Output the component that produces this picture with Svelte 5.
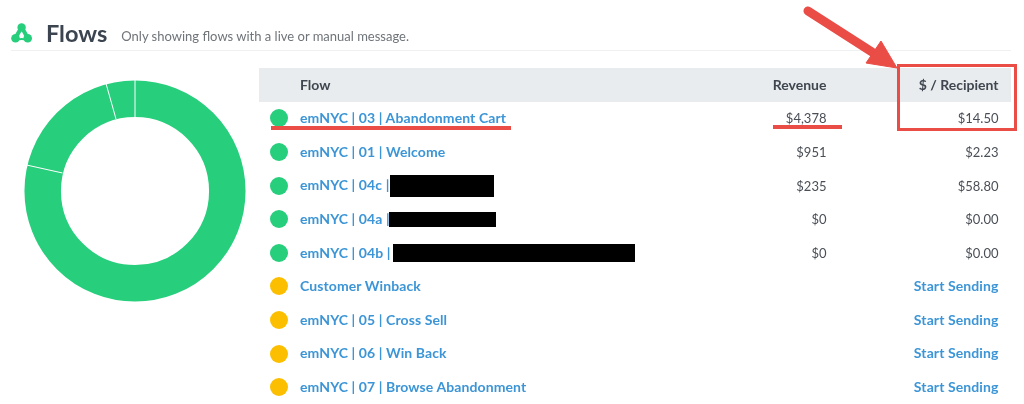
<script>
    const green = "#27ce7c";
    const yellow = "#fcbf00";

    const flows = [
        { name: "emNYC | 03 | Abandonment Cart", status: green, revenue: "$4,378", perRecipient: "$14.50" },
        { name: "emNYC | 01 | Welcome", status: green, revenue: "$951", perRecipient: "$2.23" },
        { name: "emNYC | 04c |", status: green, revenue: "$235", perRecipient: "$58.80", redact: [104, 22, 1] },
        { name: "emNYC | 04a |", status: green, revenue: "$0", perRecipient: "$0.00", redact: [107, 15, -1] },
        { name: "emNYC | 04b |", status: green, revenue: "$0", perRecipient: "$0.00", redact: [242, 18, 2] },
        { name: "Customer Winback", status: yellow },
        { name: "emNYC | 05 | Cross Sell", status: yellow },
        { name: "emNYC | 06 | Win Back", status: yellow },
        { name: "emNYC | 07 | Browse Abandonment", status: yellow },
    ];
</script>

<div class="page">
    <header class="head">
        <svg class="logo" viewBox="0 0 22 22" width="22" height="22">
            <path d="M10.6 4 L4.5 15 M10.6 4 L16.7 15" fill="none" stroke={green} stroke-width="4" />
            <path d="M4.5 17.5 Q10.6 14.5 16.7 17.5" fill="none" stroke={green} stroke-width="2" />
            <circle cx="10.6" cy="4.4" r="4.2" fill={green} />
            <circle cx="4.5" cy="15.3" r="4.3" fill={green} />
            <circle cx="16.7" cy="15.3" r="4.3" fill={green} />
        </svg>
        <h1>Flows</h1>
        <span class="sub">Only showing flows with a live or manual message.</span>
    </header>

    <div class="body">
        <div class="chart">
            <svg viewBox="0 0 222 222" width="222" height="222">
                <circle cx="111" cy="111" r="92.3" fill="none" stroke={green} stroke-width="36.5" />
                <g stroke="#fff" stroke-width="1">
                    <line x1="111" y1="0" x2="111" y2="37" />
                    <line x1="82" y1="3.5" x2="92" y2="39" />
                    <line x1="2.5" y1="85" x2="38.5" y2="93" />
                </g>
            </svg>
        </div>

        <div class="table">
            <div class="row header">
                <span class="flow">Flow</span>
                <span class="num">Revenue</span>
                <span class="num">$ / Recipient</span>
            </div>
            {#each flows as f}
                <div class="row">
                    <span class="dot" style="background: {f.status}"></span>
                    <span class="flow link">
                        <span class="name">{f.name}</span>
                        {#if f.redact}
                            <i class="redact" style="width: {f.redact[0]}px; height: {f.redact[1]}px; margin-left: {f.redact[2]}px"></i>
                        {/if}
                    </span>
                    {#if f.revenue}
                        <span class="num">{f.revenue}</span>
                        <span class="num">{f.perRecipient}</span>
                    {:else}
                        <span class="num wide link"><span class="name">Start Sending</span></span>
                    {/if}
                </div>
            {/each}
        </div>
    </div>

    <!-- annotations drawn on top of the screenshot -->
    <svg class="marks" viewBox="0 0 1024 404" width="1024" height="404">
        <path d="M271 128 H511 M773 127 H842" stroke="#ea4c46" stroke-width="4" fill="none" />
        <rect x="898.5" y="65.5" width="117" height="64" fill="none" stroke="#ea4c46" stroke-width="3" />
        <path d="M808 11 L872 52" stroke="#ea4c46" stroke-width="9" stroke-linecap="round" fill="none" />
        <path d="M881 41 L897 68 L866 63 Z" fill="#ea4c46" stroke="#ea4c46" stroke-width="1" />
    </svg>
</div>

<style>
    :global(body) {
        background: #fff;
    }

    .page {
        position: relative;
        width: 1024px;
        height: 404px;
        overflow: hidden;
        box-sizing: border-box;
        padding: 18px 13px 0 11px;
        font-family: Lato, "Open Sans", sans-serif;
        color: #4a4f57;
        filter: blur(0.35px);
    }

    .head {
        display: flex;
        align-items: center;
        height: 32px;
        border-bottom: 1px solid #eef0f1;
    }

    .logo {
        margin-right: 13px;
    }

    h1 {
        margin: -3px 14px 0 0;
        font-size: 23.5px;
        font-weight: 700;
        color: #3c4450;
    }

    .sub {
        font-size: 13px;
        color: #6f7479;
        padding-top: 4px;
    }

    .body {
        display: flex;
        margin-top: 17px;
    }

    .chart {
        width: 248px;
        padding: 12px 0 0 13px;
        box-sizing: border-box;
    }

    .table {
        flex: 1;
    }

    .row {
        display: grid;
        grid-template-columns: 41px 1fr 110px 172px;
        align-items: center;
        height: 33.6px;
        font-size: 13px;
    }

    .header {
        background: #e9ecee;
        font-size: 14px;
        font-weight: 700;
        color: #3f4650;
    }

    .header .flow {
        grid-column: 2;
    }

    .dot {
        width: 18px;
        height: 18px;
        border-radius: 50%;
        margin-left: 11px;
    }

    .flow {
        display: flex;
        align-items: center;
    }

    .link {
        color: #3b95d6;
        font-size: 14px;
        font-weight: 700;
        letter-spacing: 0.1px;
    }

    .name {
        margin-top: -1.5px;
        display: block;
    }

    .num {
        text-align: right;
        padding-right: 12.5px;
    }

    .wide {
        grid-column: 3 / 5;
    }

    .redact {
        display: block;
        background: #000;
    }

    .marks {
        position: absolute;
        top: 0;
        left: 0;
        pointer-events: none;
    }
</style>
